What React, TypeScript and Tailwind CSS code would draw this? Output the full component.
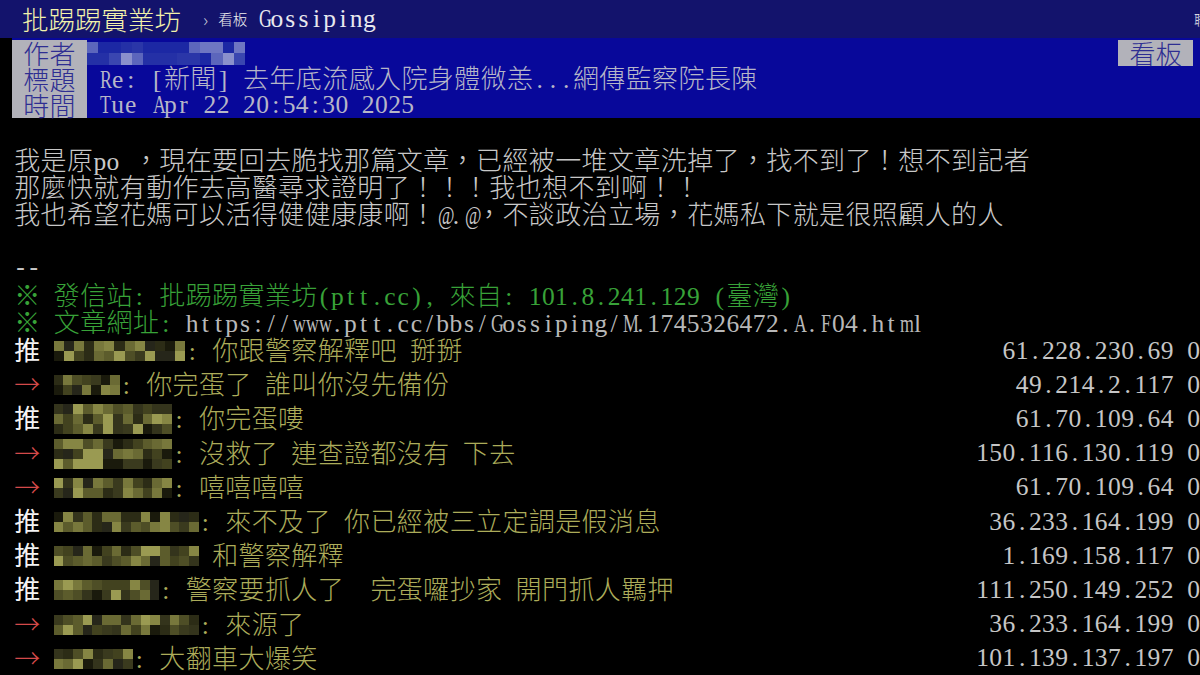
import clsx from 'clsx';

// Terminal grid: ASCII takes one 13.2px cell, everything else a double cell.
const CELL = 13.2;
const SQUEEZE = /[A-Zmw@]/;

function Cells({ text }: { text: string }) {
  return (
    <>
      {Array.from(text).map((ch, i) =>
        ch.charCodeAt(0) < 128 ? (
          <span
            key={i}
            className={clsx(
              "inline-block w-[13.2px] text-center font-['Liberation_Serif',serif] text-[25.5px]",
              SQUEEZE.test(ch) && 'scale-x-[0.7]',
            )}
          >
            {ch === ' ' ? '\u00a0' : ch}
          </span>
        ) : (
          <span key={i} className="inline-block w-[26.4px] text-center text-[26px]">
            {ch}
          </span>
        ),
      )}
    </>
  );
}

const OLIVE = ['#1a1a0c', '#26261a', '#34341c', '#42421f', '#4e4e26', '#5c5c2c', '#6a6a34', '#78783c', '#868644', '#9a9a52', '#2c2c16', '#3a3a1e'];
const BLUISH = ['#1c28a4', '#2a36a8', '#3a46b0', '#4a54b6', '#5c66bc', '#6e76c2', '#8a90cc', '#2430a6'];

function Mosaic({ cells, rows, seed, palette, block = 10 }: { cells: number; rows: number; seed: number; palette: string[]; block?: number }) {
  const width = cells * CELL;
  const cols = Math.round(width / block);
  let s = seed * 7919 + 17;
  const next = () => {
    s = (s * 1103515245 + 12345) % 2147483648;
    return s / 2147483648;
  };
  return (
    <span className="inline-flex shrink-0 flex-col align-middle" style={{ width }}>
      {Array.from({ length: rows }).map((_, r) => (
        <span key={r} className="flex">
          {Array.from({ length: cols }).map((__, c) => (
            <span
              key={c}
              className="block"
              style={{ width: width / cols, height: block, backgroundColor: palette[Math.floor(next() * palette.length)] }}
            />
          ))}
        </span>
      ))}
    </span>
  );
}

type Push = { tag: '推' | '→'; id: number; rows: number; text: string; ip: string; time: string };

const PUSHES: Push[] = [
  { tag: '推', id: 10, rows: 2, text: ': 你跟警察解釋吧 掰掰', ip: '61.228.230.69', time: '20:55' },
  { tag: '→', id: 5, rows: 2, text: ': 你完蛋了 誰叫你沒先備份', ip: '49.214.2.117', time: '20:55' },
  { tag: '推', id: 9, rows: 3, text: ': 你完蛋嘍', ip: '61.70.109.64', time: '20:55' },
  { tag: '→', id: 9, rows: 3, text: ': 沒救了 連查證都沒有 下去', ip: '150.116.130.119', time: '20:56' },
  { tag: '→', id: 9, rows: 2, text: ': 嘻嘻嘻嘻', ip: '61.70.109.64', time: '20:56' },
  { tag: '推', id: 11, rows: 2, text: ': 來不及了 你已經被三立定調是假消息', ip: '36.233.164.199', time: '20:56' },
  { tag: '推', id: 11, rows: 2, text: ' 和警察解釋', ip: '1.169.158.117', time: '20:56' },
  { tag: '推', id: 8, rows: 2, text: ': 警察要抓人了  完蛋囉抄家 開門抓人羈押', ip: '111.250.149.252', time: '20:57' },
  { tag: '→', id: 11, rows: 2, text: ': 來源了', ip: '36.233.164.199', time: '20:57' },
  { tag: '→', id: 6, rows: 2, text: ': 大翻車大爆笑', ip: '101.139.137.197', time: '20:57' },
];

function MetaTag({ label }: { label: string }) {
  return (
    <span className="flex h-full items-center bg-[#b2b2ba] px-[11px] text-[#2e2e92]">
      <Cells text={label} />
    </span>
  );
}

export default function App() {
  return (
    <div className="h-[675px] w-[1200px] overflow-hidden bg-black font-['Noto_Sans_CJK_TC',sans-serif] font-light">
      {/* top bar */}
      <div className="flex h-[38px] items-center overflow-hidden whitespace-nowrap bg-[#13136c] pl-[22px]">
        <span className="text-[26.5px] leading-none text-[#f2f2aa]">批踢踢實業坊</span>
        <span className="ml-[22px] text-[18px] text-[#c8c8d8]">›</span>
        <span className="ml-[10px] text-[14.5px] text-[#f0f0f0]">看板</span>
        <span className="ml-[10px] text-[#e8e8ee]">
          <Cells text="Gossiping" />
        </span>
        <span className="-mr-[50px] ml-auto shrink-0 text-[14px] text-[#f0f0f0]">聯絡資訊</span>
      </div>

      {/* article meta */}
      <div className="flex">
        <div className="w-[12px] shrink-0" />
        <div className="flex-1 whitespace-nowrap bg-[#08089a] pt-[2px] text-[#b6b6c8]">
          <div className="flex h-[26px] items-center leading-[26px]">
            <MetaTag label="作者" />
            <span className="flex h-full items-center">
              <Mosaic cells={12} rows={2} seed={99} palette={BLUISH} block={11.5} />
            </span>
            <span className="ml-auto mr-[7px] flex h-full items-center">
              <MetaTag label="看板" />
            </span>
          </div>
          <div className="flex h-[26px] items-center leading-[26px]">
            <MetaTag label="標題" />
            <span className="pl-[11px]">
              <Cells text="Re: [新聞] 去年底流感入院身體微恙...網傳監察院長陳" />
            </span>
          </div>
          <div className="flex h-[26px] items-center leading-[26px]">
            <MetaTag label="時間" />
            <span className="pl-[11px]">
              <Cells text="Tue Apr 22 20:54:30 2025" />
            </span>
          </div>
        </div>
      </div>

      {/* body */}
      <div className="whitespace-nowrap pl-[14px] pt-[27px] text-[#c8c8c8]">
        <div className="h-[27px] leading-[27px]">
          <Cells text="我是原po ，現在要回去脆找那篇文章，已經被一堆文章洗掉了，找不到了！想不到記者" />
        </div>
        <div className="h-[27px] leading-[27px]">
          <Cells text="那麼快就有動作去高醫尋求證明了！！！我也想不到啊！！" />
        </div>
        <div className="h-[27px] leading-[27px]">
          <Cells text="我也希望花媽可以活得健健康康啊！@.@，不談政治立場，花媽私下就是很照顧人的人" />
        </div>
        <div className="h-[27px]" />
        <div className="h-[27px] leading-[27px]">
          <Cells text="--" />
        </div>
        <div className="h-[27px] leading-[27px] text-[#38a238]">
          <Cells text="※ 發信站: 批踢踢實業坊(ptt.cc), 來自: 101.8.241.129 (臺灣)" />
        </div>
        <div className="h-[27px] leading-[27px]">
          <span className="text-[#38a238]">
            <Cells text="※ 文章網址: " />
          </span>
          <span className="text-[#b8b8b8] underline decoration-[#9a9a9a] underline-offset-[2px]">
            <Cells text="https://www.ptt.cc/bbs/Gossiping/M.1745326472.A.F04.html" />
          </span>
        </div>

        {PUSHES.map((p, i) => (
          <div key={i} className="flex h-[34.2px] items-center leading-[34px]">
            <span className={p.tag === '推' ? 'font-normal text-[#f4f4f4]' : 'text-[#d44a4a]'}>
              <Cells text={p.tag + ' '} />
            </span>
            <Mosaic cells={p.id} rows={p.rows} seed={i + 3} palette={OLIVE} />
            <span className="text-[#acac5a]">
              <Cells text={p.text} />
            </span>
            <span className="-mr-[132px] ml-auto shrink-0 text-[#c6c6c6]">
              <Cells text={`${p.ip} 04/22 ${p.time}`} />
            </span>
          </div>
        ))}
      </div>
    </div>
  );
}
